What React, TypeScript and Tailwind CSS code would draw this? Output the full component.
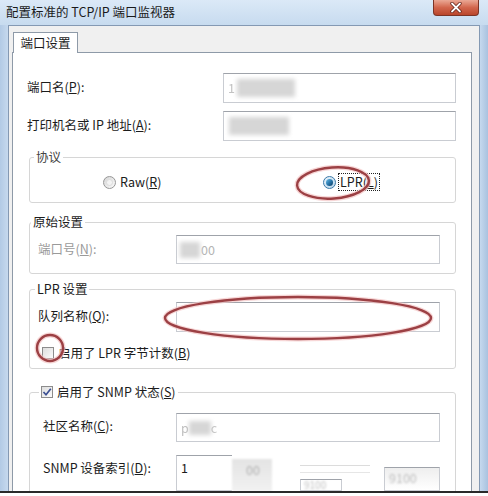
import React from "react";

function Box({ className, children }: { className: string; children?: React.ReactNode }) {
  return (
    <div className={"border border-[#c9ccd2] border-t-[#9fa3aa] bg-white flex items-center " + className}>
      {children}
    </div>
  );
}

function Radio({ checked }: { checked?: boolean }) {
  return checked ? (
    <span className="w-[13px] h-[13px] shrink-0 rounded-full border border-[#3a78a8] bg-gradient-to-br from-[#eaf4fb] to-[#b8d6ec] flex items-center justify-center">
      <span className="w-[7px] h-[7px] rounded-full bg-gradient-to-br from-[#6cc0e8] via-[#2a78ad] to-[#0d3d63]" />
    </span>
  ) : (
    <span className="w-[13px] h-[13px] shrink-0 rounded-full border border-[#979797] bg-gradient-to-br from-[#d6d6d6] to-[#fbfbfb] flex items-center justify-center">
      <span className="w-[7px] h-[7px] rounded-full border border-[#dcdcdc] bg-[#f4f4f4]" />
    </span>
  );
}

function Check({ checked }: { checked?: boolean }) {
  return (
    <span className="w-[12px] h-[12px] shrink-0 border border-[#8c8c8c] bg-gradient-to-br from-[#dedede] to-[#fbfbfb] flex items-center justify-center">
      {checked && (
        <svg width="10" height="10" viewBox="0 0 10 10">
          <path d="M1.5 5 L4 7.8 L8.8 1.8" stroke="#3b4f92" strokeWidth="1.7" fill="none" />
        </svg>
      )}
    </span>
  );
}

function Blur({ className }: { className: string }) {
  return <span className={"inline-block bg-[#d6d6d6] blur-[2px] " + className} />;
}

export default function App() {
  return (
    <div className="relative w-[488px] h-[496px] overflow-hidden bg-white font-['Noto_Sans_CJK_SC','Noto_Sans',sans-serif] text-[12.5px] leading-[16px] text-[#1c1c1c]">
      <div className="h-[491px] flex flex-col bg-[#bed3ea] overflow-hidden">
        {/* title bar */}
        <div className="h-[25px] shrink-0 flex bg-gradient-to-b from-[#dbe9f7] to-[#c7dbef]">
          <div className="pl-[6px] pt-[4px] text-[#1a1a1a]">配置标准的 TCP/IP 端口监视器</div>
          <div className="ml-auto mr-[9px] w-[46px] h-[16px] rounded-b-[4px] border border-t-0 border-[#7c3426] bg-gradient-to-b from-[#eaa895] via-[#d2664d] to-[#b9452b] flex items-center justify-center">
            <svg width="12" height="11" viewBox="0 0 12 11">
              <path d="M2 1.5 L10 9.5 M10 1.5 L2 9.5" stroke="#5a1a10" strokeWidth="3.2" strokeLinecap="round" />
              <path d="M2 1.5 L10 9.5 M10 1.5 L2 9.5" stroke="#ffffff" strokeWidth="1.8" strokeLinecap="round" />
            </svg>
          </div>
        </div>

        <div className="flex flex-1 min-h-0">
          <div className="w-[8px] shrink-0 bg-gradient-to-r from-[#b2cae5] to-[#c6d9ee]" />
          <div className="w-[472px] shrink-0 bg-[#f0f0f0] border-t border-l border-r border-[#8499b3] flex flex-col pt-[6px] pl-[3px]">
            {/* tab */}
            <div className="ml-[1px] w-[65px] h-[21px] shrink-0 border border-b-0 border-[#8e9aa8] bg-white relative z-10 -mb-px flex items-center justify-center">
              端口设置
            </div>
            {/* panel */}
            <div className="w-[460px] flex-1 border border-[#8e9aa8] bg-white pl-[14px] pr-[15px] pt-[20px] flex flex-col">
              <div className="flex items-center h-[30px] shrink-0">
                <div className="w-[196px] pb-[3px]">端口名(<u>P</u>):</div>
                <Box className="flex-1 h-full pl-[4px]">
                  <span className="text-[#c2c2c2] blur-[0.6px]">1</span>
                  <Blur className="w-[58px] h-[18px] ml-[2px]" />
                </Box>
              </div>
              <div className="flex items-center h-[30px] mt-[8px] shrink-0">
                <div className="w-[196px] pb-[3px]">打印机名或 IP 地址(<u>A</u>):</div>
                <Box className="flex-1 h-full pl-[5px]">
                  <Blur className="w-[60px] h-[18px]" />
                </Box>
              </div>

              {/* 协议 */}
              <div className="relative ml-[2px] mt-[16px] h-[46px] shrink-0 border border-[#d6d6d6] rounded-[3px] pl-[73px] pt-[16px]">
                <div className="absolute -top-[9px] left-[4px] bg-white px-[2px] text-[#444]">协议</div>
                <div className="flex items-center h-[16px]">
                  <div className="w-[220px] flex items-center gap-[4px]">
                    <Radio />
                    <span>Raw(<u>R</u>)</span>
                  </div>
                  <div className="flex items-center gap-[2px]">
                    <Radio checked />
                    <span className="border border-dotted border-[#222] px-[1px] leading-[16px]">LPR(<u>L</u>)</span>
                  </div>
                </div>
              </div>

              {/* 原始设置 */}
              <div className="relative ml-[2px] mt-[19px] h-[52px] shrink-0 border border-[#d6d6d6] rounded-[3px] pl-[8px] pr-[15px] pt-[12px]">
                <div className="absolute -top-[9px] left-[1px] bg-white px-[2px]">原始设置</div>
                <div className="flex items-center h-[29px]">
                  <div className="w-[138px] text-[#9a9a9a] pb-[2px]">端口号(<u>N</u>):</div>
                  <Box className="flex-1 h-full pl-[3px]">
                    <Blur className="w-[20px] h-[16px]" />
                    <span className="text-[#b4b4b4] ml-[1px]">00</span>
                  </Box>
                </div>
              </div>

              {/* LPR 设置 */}
              <div className="relative ml-[2px] mt-[15px] h-[80px] shrink-0 border border-[#d6d6d6] rounded-[3px] pl-[8px] pr-[15px] pt-[12px]">
                <div className="absolute -top-[9px] left-[5px] bg-white px-[2px]">LPR 设置</div>
                <div className="flex items-center h-[30px]">
                  <div className="w-[138px] pb-[3px]">队列名称(<u>Q</u>):</div>
                  <Box className="flex-1 h-full" />
                </div>
                <div className="flex items-center gap-[4px] mt-[13px] pl-[4px] h-[16px]">
                  <Check />
                  <span>启用了 LPR 字节计数(<u>B</u>)</span>
                </div>
              </div>

              {/* SNMP */}
              <div className="relative ml-[2px] mt-[23px] h-[130px] shrink-0 border border-[#d6d6d6] rounded-[3px] pl-[13px] pr-[15px] pt-[20px]">
                <div className="absolute -top-[9px] left-[9px] bg-white px-[2px] flex items-center gap-[4px]">
                  <Check checked />
                  <span>启用了 SNMP 状态(<u>S</u>)</span>
                </div>
                <div className="flex items-center h-[29px]">
                  <div className="w-[133px] pb-[3px]">社区名称(<u>C</u>):</div>
                  <Box className="flex-1 h-full pl-[4px]">
                    <span className="text-[#bdbdbd] blur-[0.5px]">p</span>
                    <Blur className="w-[22px] h-[14px]" />
                    <span className="text-[#c6c6c6] blur-[0.5px]">c</span>
                  </Box>
                </div>
                <div className="flex items-start mt-[13px]">
                  <div className="w-[133px] pt-[5px]">SNMP 设备索引(<u>D</u>):</div>
                  <Box className="w-[56px] h-[36px] items-start pt-[4px] pl-[4px] border-r-0">1</Box>
                  <div className="w-[40px] h-[36px] mt-[4px] bg-gradient-to-b from-[#e4e4e4] to-[#f3f3f3] blur-[1px] flex items-start pl-[14px] pt-[3px] text-[#b0b0b0]">
                    00
                  </div>
                  <div className="w-[70px] ml-[28px] mt-[10px] flex flex-col gap-[6px]">
                    <div className="h-px bg-[#dcdcdc]" />
                    <div className="h-px bg-[#e6e6e6]" />
                    <Box className="w-[42px] h-[12px] pl-[3px] text-[10px] leading-[10px] text-[#c0c0c0]">
                      <span className="blur-[0.8px]">9100</span>
                    </Box>
                  </div>
                  <Box className="ml-auto mt-[12px] w-[56px] h-[24px] items-start pl-[4px] pt-[2px] text-[#bdbdbd] bg-gradient-to-b from-[#eeeeee] to-white">
                    <span className="blur-[1px]">9100</span>
                  </Box>
                </div>
              </div>
            </div>
          </div>
          <div className="flex-1 bg-gradient-to-r from-[#c6d9ee] to-[#a9c2df]" />
        </div>
      </div>
      <div className="h-[2px] bg-[#2a2a2a]" />
      <div className="h-[3px] bg-white" />

      {/* red annotation marks */}
      <svg className="absolute left-0 top-0 pointer-events-none" width="488" height="496">
        <g fill="none">
          <ellipse cx="333" cy="183" rx="36" ry="15.5" transform="rotate(-4 333 183)" stroke="#f3c4c4" strokeWidth="5" opacity="0.7" />
          <ellipse cx="333" cy="183" rx="36" ry="15.5" transform="rotate(-4 333 183)" stroke="#9c4044" strokeWidth="2.4" />
          <ellipse cx="298" cy="318" rx="133" ry="21" stroke="#f3c4c4" strokeWidth="5" opacity="0.7" />
          <ellipse cx="298" cy="318" rx="133" ry="21" stroke="#9c4044" strokeWidth="2.4" />
          <circle cx="50" cy="348" r="13" stroke="#f3c4c4" strokeWidth="5" opacity="0.7" />
          <circle cx="50" cy="348" r="13" stroke="#9c4044" strokeWidth="2.4" />
        </g>
      </svg>
    </div>
  );
}
